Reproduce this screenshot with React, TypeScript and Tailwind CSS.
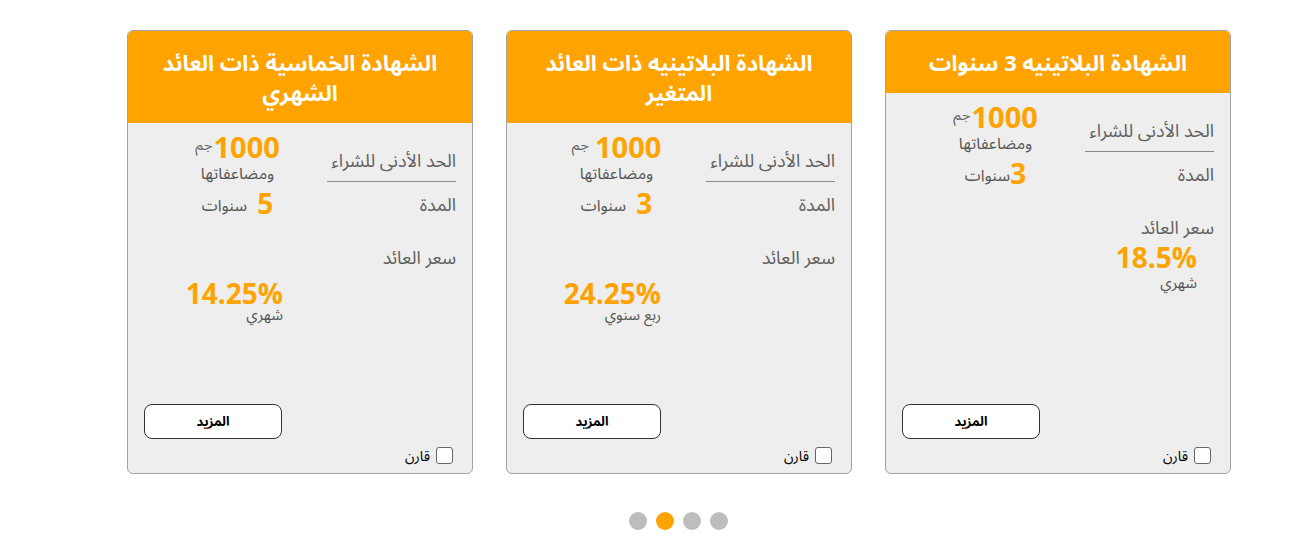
import React from "react";

type Card = {
  title: React.ReactNode;
  years: string;
  gapYears: boolean;
  gapJm: boolean;
  rate: string;
  period: string;
  rateMt: string;
  rateMr: string;
  periodLead: string;
};

const cards: Card[] = [
  {
    title: <>الشهادة البلاتينيه 3 سنوات</>,
    years: "3",
    gapYears: false,
    gapJm: false,
    rate: "18.5%",
    period: "شهري",
    rateMt: "mt-[6px]",
    rateMr: "mr-[33px]",
    periodLead: "leading-[24px]",
  },
  {
    title: (
      <>
        الشهادة البلاتينيه ذات العائد
        <br />
        المتغير
      </>
    ),
    years: "3",
    gapYears: true,
    gapJm: true,
    rate: "24.25%",
    period: "ربع سنوي",
    rateMt: "mt-[12px]",
    rateMr: "mr-[190px]",
    periodLead: "leading-[16px]",
  },
  {
    title: (
      <>
        الشهادة الخماسية ذات العائد
        <br />
        الشهري
      </>
    ),
    years: "5",
    gapYears: true,
    gapJm: false,
    rate: "14.25%",
    period: "شهري",
    rateMt: "mt-[12px]",
    rateMr: "mr-[189px]",
    periodLead: "leading-[16px]",
  },
];

const font = { fontFamily: '"Open Sans", "Noto Sans Arabic", "DejaVu Sans", sans-serif' };

function CertCard({ c }: { c: Card }) {
  return (
    <div className="w-[346px] h-[444px] rounded-[6px] border border-[#a3a3a3] overflow-hidden flex flex-col bg-[#eeeeee]">
      <div className="bg-[#ffa300] text-white font-bold text-[22px] leading-[30px] text-center px-4 pt-[16px] pb-[16px]">
        {c.title}
      </div>
      <div className="flex-1 flex flex-col">
        <div className="flex flex-row">
          <div className="w-[129px] mr-[16px] text-[18px] text-[#5f5f5f] leading-[22px] pt-[26px] whitespace-nowrap">
            <div className="pb-[10px] border-b border-[#8a8a8a]">الحد الأدنى للشراء</div>
            <div className="mt-[11px]">المدة</div>
            <div className="mt-[31px]">سعر العائد</div>
          </div>
          <div className="flex-1 pl-[20px] pt-[8px] text-center">
            <div className={`flex flex-row justify-center items-center ${c.gapJm ? "gap-[6px]" : "gap-[1px]"}`}>
              <span className="text-[29px] font-bold leading-[32px] text-[#ffa300]">1000</span>
              <span className="text-[15px] text-[#666666] mb-[6px]">جم</span>
            </div>
            <div className="text-[16px] leading-[20px] text-[#555555]">ومضاعفاتها</div>
            <div className={`mt-[4px] flex flex-row justify-center items-center ${c.gapYears ? "gap-[10px]" : "gap-0"}`}>
              <span className="text-[28px] font-bold leading-[32px] text-[#ffa300]">{c.years}</span>
              <span className="text-[16px] text-[#555555] mt-[4px]">سنوات</span>
            </div>
          </div>
        </div>
        <div className={`${c.rateMt} ${c.rateMr} w-fit text-right`}>
          <div dir="ltr" className="text-[28px] font-bold leading-[26px] text-[#ffa300]">{c.rate}</div>
          <div className={`text-[15px] ${c.periodLead} text-[#555555]`}>{c.period}</div>
        </div>
        <div className="mt-auto flex flex-row justify-end pl-[16px]">
          <button className="w-[138px] h-[35px] rounded-[8px] border border-[#333333] bg-white text-[13px] font-bold text-black">
            المزيد
          </button>
        </div>
        <div className="flex flex-row items-center gap-[6px] pr-[19px] mt-[8px] mb-[9px] h-[17px]">
          <span className="w-[17px] h-[17px] rounded-[3px] border border-[#666666] bg-white"></span>
          <span className="text-[14px] text-black">قارن</span>
        </div>
      </div>
    </div>
  );
}

export default function App() {
  return (
    <div className="w-[1289px] h-[545px] bg-white" style={font}>
      <div className="pt-[30px] ml-[126px] w-[1105px]">
        <div dir="rtl" className="flex flex-row gap-[33px]">
          {cards.map((c, i) => (
            <CertCard key={i} c={c} />
          ))}
        </div>
        <div className="mt-[38px] flex flex-row justify-center gap-[9px]">
          <span className="w-[18px] h-[18px] rounded-full bg-[#bdbdbd]"></span>
          <span className="w-[18px] h-[18px] rounded-full bg-[#ffa300]"></span>
          <span className="w-[18px] h-[18px] rounded-full bg-[#bdbdbd]"></span>
          <span className="w-[18px] h-[18px] rounded-full bg-[#bdbdbd]"></span>
        </div>
      </div>
    </div>
  );
}
